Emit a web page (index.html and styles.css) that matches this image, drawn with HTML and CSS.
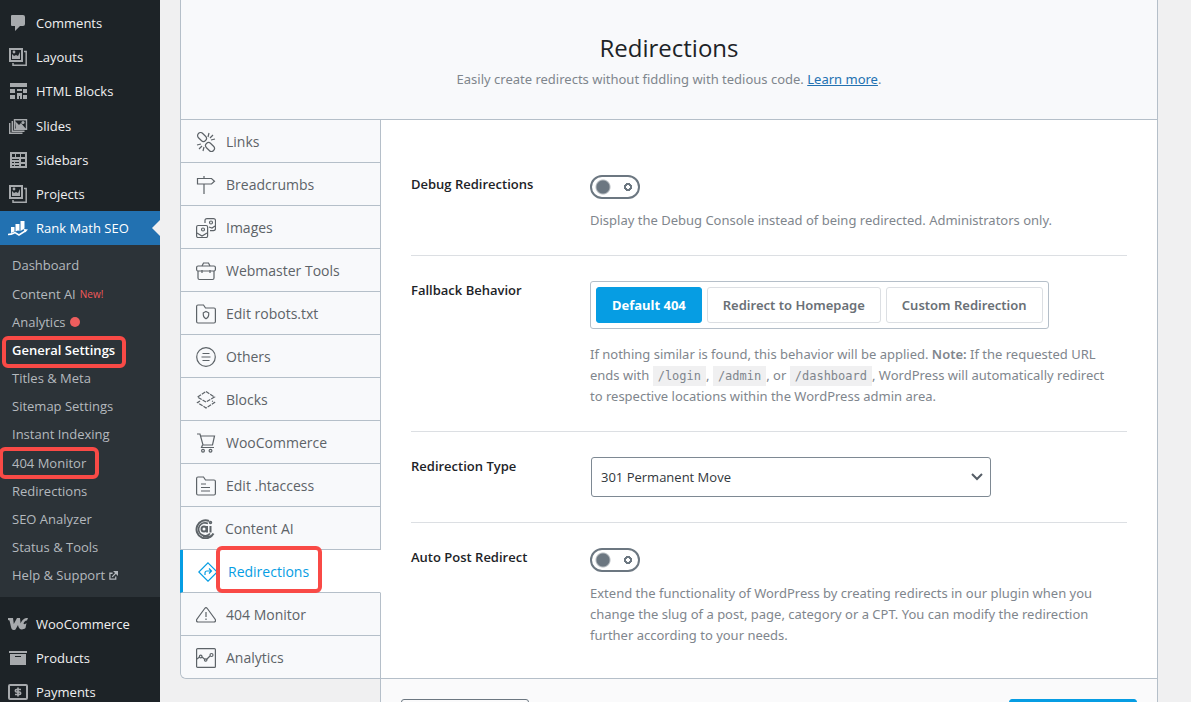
FILE: index.html
```html
<!DOCTYPE html>
<html lang="en">
<head>
<meta charset="utf-8">
<title>Redirections</title>
<link rel="stylesheet" href="styles.css">
</head>
<body>
<div class="layout">
  <nav class="admin-menu" aria-label="Main menu">
    <ul class="menu">
      <li><a class="menu-link" href="#"><svg class="menu-icon" viewBox="0 0 20 20"><path fill="currentColor" d="M4 2h11a2 2 0 0 1 2 2v7a2 2 0 0 1-2 2h-3l-5 5v-5H4a1 1 0 0 1-1-1V3a1 1 0 0 1 1-1z"/></svg>Comments</a></li>
      <li><a class="menu-link" href="#"><svg class="menu-icon" viewBox="0 0 20 20"><path fill="none" stroke="currentColor" stroke-width="2" d="M2 2h12v12H2z"/><path fill="none" stroke="currentColor" stroke-width="1.5" d="M16 4.5h2.2v13.7H5V16"/><path fill="currentColor" d="M4 12V7l2 2 2-1 2 1 2-4v7z"/><circle cx="6" cy="5" r="1.4" fill="currentColor"/></svg>Layouts</a></li>
      <li><a class="menu-link" href="#"><svg class="menu-icon" viewBox="0 0 20 20"><path fill="currentColor" d="M2 2h17v4H2zM2 8h5v4H2zM9 8h5v2H9zM15 8h4v4h-4zM2 14h5v4H2zM9 12h5v6h-2v-3h-1v3H9zM15 14h4v4h-4z"/></svg>HTML Blocks</a></li>
      <li><a class="menu-link" href="#"><svg class="menu-icon" viewBox="0 0 20 20"><path fill="none" stroke="currentColor" stroke-width="1.4" d="M6.5 3.7h12v9.500h-12zM4.300 5v10.300H16.500M1.700 7v10.300H14.500"/><path fill="currentColor" d="M7 5l4 4 2-2 5 6H8z"/><circle cx="15" cy="6.500" r="1.600" fill="currentColor"/></svg>Slides</a></li>
      <li><a class="menu-link" href="#"><svg class="menu-icon" viewBox="0 0 20 20"><path fill="currentColor" fill-rule="evenodd" d="M2 2h17v16H2zM4 4v3h3V4zM8 4v3h4V4zM13 4v3h4V4zM4 9v1h7V9zM13 9v3h4V9zM4 12v1h2v-1zM7 12v1h4v-1zM4 15v1h2v-1zM7 15v1h4v-1zM13 14v2h4v-2z"/></svg>Sidebars</a></li>
      <li><a class="menu-link" href="#"><svg class="menu-icon" viewBox="0 0 20 20"><path fill="none" stroke="currentColor" stroke-width="2" d="M2 2h12v12H2z"/><path fill="none" stroke="currentColor" stroke-width="1.5" d="M16 4.5h2.2v13.7H5V16"/><path fill="currentColor" d="M4 12V7l2 2 2-1 2 1 2-4v7z"/><circle cx="6" cy="5" r="1.4" fill="currentColor"/></svg>Projects</a></li>
      <li>
        <a class="menu-link menu-link-current" href="#"><svg class="menu-icon" viewBox="0 0 20 20"><path fill="currentColor" d="M3 9h3.500v4.500L3 15zM7.500 6h4v7L10 12.500l-2.500 1zM12.500 3h4v7.500L12.500 13z"/><path fill="none" stroke="currentColor" stroke-width="1.500" d="M0 16.500c4 0 5-1 7-2l4 2.500 7-4.500"/><path fill="currentColor" d="M15.500 11l4.500.5-3 3z"/></svg>Rank Math SEO</a>
        <ul class="submenu">
          <li><a class="sub-link" href="#">Dashboard</a></li>
          <li><a class="sub-link" href="#">Content AI <span class="new-tag">New!</span></a></li>
          <li><a class="sub-link" href="#">Analytics <span class="alert-dot"></span></a></li>
          <li class="marked"><a class="sub-link sub-link-current" href="#">General Settings</a><span class="mark mark-settings"></span></li>
          <li><a class="sub-link" href="#">Titles &amp; Meta</a></li>
          <li><a class="sub-link" href="#">Sitemap Settings</a></li>
          <li><a class="sub-link" href="#">Instant Indexing</a></li>
          <li class="marked"><a class="sub-link" href="#">404 Monitor</a><span class="mark mark-monitor"></span></li>
          <li><a class="sub-link" href="#">Redirections</a></li>
          <li><a class="sub-link" href="#">SEO Analyzer</a></li>
          <li><a class="sub-link" href="#">Status &amp; Tools</a></li>
          <li><a class="sub-link" href="#">Help &amp; Support <svg class="external" viewBox="0 0 10 10"><path fill="none" stroke="currentColor" stroke-width="1.400" d="M4 2.500H1v6.500h6.500V6M3.500 6.500L8 2"/><path fill="currentColor" d="M4.500 0H10v5.500z"/></svg></a></li>
        </ul>
      </li>
      <li class="menu-gap"><a class="menu-link" href="#"><svg class="menu-icon" viewBox="0 0 20 20"><path fill="currentColor" d="M0 4h5l.8 6L9 4h3l.6 5.500C14 6 16 4 20 4l-1 2.500c-2 0-3 1.500-3.500 3 .8 1.200 2 .5 3-.5L17.500 14c-2.500 2-5 1.500-6 .5-.8-.8-1.200-2-1.500-3.500L7.500 15.500C5 17 3.500 15.500 3 13L1.500 6.500 0 6z"/></svg>WooCommerce</a></li>
      <li><a class="menu-link" href="#"><svg class="menu-icon" viewBox="0 0 20 20"><path fill="currentColor" fill-rule="evenodd" d="M1 3h18v2H1zM2 6h16v11H2zM7 8v1h6V8z"/></svg>Products</a></li>
      <li><a class="menu-link" href="#"><svg class="menu-icon" viewBox="0 0 20 20"><rect x="1" y="3" width="18" height="14" rx="1" fill="none" stroke="currentColor" stroke-width="2"/><path fill="none" stroke="currentColor" stroke-width="1.700" d="M13 7.500H8.500c-1.500 0-1.500 2.500 0 2.500h3c1.500 0 1.500 2.500 0 2.500H7M10 5.500v9"/></svg>Payments</a></li>
    </ul>
  </nav>

  <main class="content">
    <section class="panel">
      <header class="panel-head">
        <h1 class="title">Redirections</h1>
        <p class="subtitle">Easily create redirects without fiddling with tedious code. <a class="learn" href="#">Learn more</a>.</p>
      </header>
      <div class="panel-body">
        <nav class="tabs" aria-label="Settings sections">
          <a class="tab" href="#"><svg class="tab-icon" viewBox="0 0 20 20"><rect x="1" y="2" width="10" height="6" rx="3" transform="rotate(45 6 5)"/><rect x="9" y="12" width="10" height="6" rx="3" transform="rotate(45 14 15)"/><path d="M12 5l1-4M14 6l3-3M15 8l4-1M1 13l4-1M3 17l3-3M7 19l1-4"/></svg>Links</a>
          <a class="tab" href="#"><svg class="tab-icon" viewBox="0 0 20 20"><path d="M8 1v2M8 9v10M1.500 3.500h14l3 2.700-3 2.800h-14z"/></svg>Breadcrumbs</a>
          <a class="tab" href="#"><svg class="tab-icon" viewBox="0 0 20 20"><rect x=".6" y="7.500" width="11" height="12" rx="1.500"/><path d="M9 5V2.500Q9 .6 11 .6h6.500q2 0 2 2v8q0 2-2 2H14M1 15l5 3 5-3M13 9l3 1 3-2"/><circle cx="7" cy="11.500" r="1.500"/><circle cx="15" cy="4.500" r="1.500"/></svg>Images</a>
          <a class="tab" href="#"><svg class="tab-icon" viewBox="0 0 20 20"><rect x=".6" y="5" width="18.800" height="5" rx="1.500"/><path d="M2 10v7q0 1.500 1.500 1.500h13q1.500 0 1.500-1.500v-7M6 5l1.500-3h5L14 5M6 9v3M14 9v3"/></svg>Webmaster Tools</a>
          <a class="tab" href="#"><svg class="tab-icon" viewBox="0 0 20 20"><path d="M.6 17.500v-15Q.6 1 2 1h5.500l2 3H18q1.400 0 1.400 1.500v12q0 1.500-1.400 1.500H2Q.6 19 .6 17.500z"/><path d="M10 7.500l2.700 1.300c.3 3-.5 5-2.700 6-2.200-1-3-3-2.700-6z"/></svg>Edit robots.txt</a>
          <a class="tab" href="#"><svg class="tab-icon" viewBox="0 0 20 20"><circle cx="10" cy="10" r="9.300"/><path d="M6.500 6.500h7M5.500 10h9M6.500 13.500h7"/></svg>Others</a>
          <a class="tab" href="#"><svg class="tab-icon" viewBox="0 0 20 20"><path d="M10 1.500l8.500 5.500-8.500 5-8.500-5z" stroke-dasharray="4 1"/><path d="M4 11l-2.500 1.500L10 18l8.500-5.500L16 11" stroke-dasharray="4 1"/></svg>Blocks</a>
          <a class="tab" href="#"><svg class="tab-icon" viewBox="0 0 20 20"><path d="M1 1h3l3 11h9.500L18.500 3H5M6.500 12l-1 2.500H18"/><circle cx="7" cy="17.800" r="1.400"/><circle cx="14.500" cy="17.800" r="1.400"/></svg>WooCommerce</a>
          <a class="tab" href="#"><svg class="tab-icon" viewBox="0 0 20 20"><path d="M.6 17.500v-15Q.6 1 2 1h5.500l2 3H18q1.400 0 1.400 1.500v12q0 1.500-1.400 1.500H2Q.6 19 .6 17.500zM5 8h5M5 11.500h9M5 15h9"/></svg>Edit .htaccess</a>
          <a class="tab tab-ai" href="#"><svg class="tab-icon" viewBox="0 0 20 20"><path stroke-width="2" d="M14 2A9 9 0 1 0 18.500 14.500"/><path stroke-width="1.700" d="M13 4.500A6.500 6.500 0 1 0 15 14.500"/><circle cx="9" cy="10" r="2.500" stroke-width="2"/><path stroke-width="2" d="M12 7v6.500M15.500 7v6.500M8 17.500h8"/><circle cx="15.500" cy="3.500" r="1" stroke-width="1.500"/></svg>Content AI</a>
          <div class="marked">
            <a class="tab tab-current" href="#" aria-current="page"><svg class="tab-icon" viewBox="0 0 20 20"><path d="M10 .8l9.200 9.200L10 19.200.8 10z"/><path d="M7 13v-2q0-2 2-2h4M11 6.500L13.500 9 11 11.500"/></svg>Redirections</a>
            <span class="mark mark-tab"></span>
          </div>
          <a class="tab" href="#"><svg class="tab-icon" viewBox="0 0 20 20"><path d="M8.700 3.500q1.300-1.700 2.600 0l8 11q.8 2.500-1.500 2.500H2.200Q0 17 .7 14.500zM10 7v5M10 13.500v1.500"/></svg>404 Monitor</a>
          <a class="tab tab-end" href="#"><svg class="tab-icon" viewBox="0 0 20 20"><rect x=".6" y=".6" width="18.800" height="18.800" rx="1"/><path d="M1 11l2.500-2M6 9l3 2.500M10.500 11.500L14 8"/><circle cx="4.700" cy="8.500" r="1.300"/><circle cx="9.700" cy="12" r="1.200"/><circle cx="15.500" cy="7" r="1.500"/></svg>Analytics</a>
        </nav>

        <form class="settings">
          <div class="row">
            <label class="label" for="debug">Debug Redirections</label>
            <div class="field">
              <input class="toggle" type="checkbox" id="debug">
              <p class="help">Display the Debug Console instead of being redirected. Administrators only.</p>
            </div>
          </div>
          <div class="row">
            <span class="label" id="fallback">Fallback Behavior</span>
            <div class="field">
              <div class="choices" role="group" aria-labelledby="fallback">
                <button class="choice choice-on" type="button">Default 404</button>
                <button class="choice" type="button">Redirect to Homepage</button>
                <button class="choice" type="button">Custom Redirection</button>
              </div>
              <p class="help help-wide">If nothing similar is found, this behavior will be applied. <strong>Note:</strong> If the requested URL ends with <code>/login</code>, <code>/admin</code>, or <code>/dashboard</code>, WordPress will automatically redirect to respective locations within the WordPress admin area.</p>
            </div>
          </div>
          <div class="row">
            <label class="label" for="type">Redirection Type</label>
            <div class="field">
              <div class="select-wrap">
                <select class="select" id="type"><option>301 Permanent Move</option></select>
                <svg class="chevron" viewBox="0 0 12 8"><path d="M1 1l5 5 5-5"/></svg>
              </div>
            </div>
          </div>
          <div class="row">
            <label class="label" for="auto">Auto Post Redirect</label>
            <div class="field">
              <input class="toggle" type="checkbox" id="auto">
              <p class="help">Extend the functionality of WordPress by creating redirects in our plugin when you change the slug of a post, page, category or a CPT. You can modify the redirection further according to your needs.</p>
            </div>
          </div>
        </form>
      </div>
    </section>
    <footer class="actions">
      <button class="action" type="button" aria-label="Reset Options"></button>
      <button class="action action-save" type="button" aria-label="Save Changes"></button>
    </footer>
  </main>
</div>
</body>
</html>
```
FILE: styles.css
```css
* { box-sizing: border-box; }

body {
  margin: 0;
  height: 100vh;
  overflow: hidden;
  background: #f0f0f1;
  color: #1d2327;
  font: 14px/20px "Open Sans", "Noto Sans", sans-serif;
}

ul { list-style: none; margin: 0; padding: 0; }
a { text-decoration: none; }

.layout { display: flex; min-height: 100vh; }

/* Admin menu */
.admin-menu {
  flex: none;
  width: 160px;
  padding-top: 6px;
  background: #1d2327;
}
.menu-link {
  display: flex;
  align-items: center;
  gap: 8px;
  padding: 8px;
  color: #f0f0f1;
  font-size: 13px;
  line-height: 1.4;
  white-space: nowrap;
}
.menu-icon { width: 20px; height: 20px; margin: -1px 0; color: #a7aaad; }
.menu-gap { margin-top: 10px; }
.menu-link-current { position: relative; background: #2271b1; color: #fff; }
.menu-link-current .menu-icon { color: #fff; }
.menu-link-current::after {
  content: "";
  position: absolute;
  right: 0;
  top: 9px;
  border: 8px solid transparent;
  border-left: 0;
  border-right-color: #f0f0f1;
}
.submenu { padding: 6px 0 7px; background: #2c3338; }
.sub-link {
  display: flex;
  align-items: center;
  gap: 4px;
  padding: 5px 12px;
  color: #b4b9be;
  font-size: 13px;
  line-height: 1.4;
  white-space: nowrap;
}
.sub-link-current { color: #fff; font-weight: 600; }
.new-tag { color: #f05a5a; font-size: 10px; line-height: 14px; }
.alert-dot { width: 10px; height: 10px; border-radius: 50%; background: #ee5e5e; }
.external { width: 9px; height: 9px; }

/* Highlight frames */
.marked { position: relative; }
.mark {
  position: absolute;
  border: 4px solid #f94a46;
  border-radius: 6px;
  pointer-events: none;
}
.mark-settings { inset: 0 34px -4px 2px; }
.mark-monitor { inset: -2px 61px -2px -1px; }
.mark-tab { inset: -4px 59px 0 35px; }

/* Panel */
.content { flex: 1; min-width: 0; padding: 0 33px 0 20px; }
.panel {
  border: 1px solid #b5bfc9;
  border-top: 0;
  border-radius: 0 0 0 6px;
  background: #f8f9fa;
}
.panel-head {
  padding: 32px 20px 30px;
  border-bottom: 1px solid #b5bfc9;
  background: #f8f9fb;
  text-align: center;
}
.title { margin: 0 0 5px; font-size: 24px; font-weight: 500; line-height: 32px; }
.subtitle {
  margin: 0;
  color: #7f868d;
  font: 13px/20px "Noto Sans", "Open Sans", sans-serif;
}
.learn { color: #2271b1; text-decoration: underline; }
.panel-body { display: grid; grid-template-columns: 200px 1fr; }

.tabs { background: #f8f9fb; border-radius: 0 0 0 6px; }
.tab {
  display: flex;
  align-items: center;
  gap: 10px;
  height: 43px;
  padding: 1px 0 0 15px;
  border-right: 1px solid #b5bfc9;
  border-bottom: 1px solid #b5bfc9;
  color: #5d6368;
  font-size: 14px;
}
.tab-end { height: 42px; border-bottom: 0; }
.tab-icon {
  width: 20px;
  height: 20px;
  fill: none;
  stroke: currentColor;
  stroke-width: 1.2;
}
.tab-ai { padding-left: 14px; }
.tab-current {
  margin-left: -1px;
  border-left: 3px solid #069de3;
  border-right-color: #fff;
  background: #fff;
  color: #069de3;
}

/* Settings */
.settings { padding: 30px; background: #fff; }
.row {
  display: grid;
  grid-template-columns: 179px 1fr;
  padding: 25px 0 24px;
  border-bottom: 1px solid #dcdfe3;
}
.row:last-child { border-bottom: 0; padding-bottom: 0; }
.label { font-weight: 600; font-size: 13px; line-height: 18px; }
.help {
  margin: 11px 0 0;
  padding-right: 10px;
  color: #7f868d;
  font: 13px/21px "Noto Sans", "Open Sans", sans-serif;
}
.help-wide { margin-top: 15px; }
.help code {
  padding: 3px 5px;
  background: #f0f0f1;
  font: 12px "DejaVu Sans Mono", monospace;
}
.help strong { font-weight: 600; }

.toggle {
  appearance: none;
  display: block;
  width: 50px;
  height: 24px;
  margin: 0;
  border: 2px solid #6c7781;
  border-radius: 12px;
  background:
    radial-gradient(circle at 11px 10px, #6c7781 6px, transparent 8px),
    radial-gradient(circle at 36px 10px, transparent 2px, #6c7781 2px, #6c7781 4px, transparent 4px),
    #fff;
}

.choices {
  display: inline-flex;
  gap: 5px;
  padding: 5px;
  border: 1px solid #b5bfc9;
  border-radius: 3px;
  vertical-align: top;
}
.choice {
  height: 36px;
  padding: 0 15px;
  border: 1px solid #dcdfe3;
  border-radius: 3px;
  background: #fff;
  color: #6a7076;
  font: 600 13px/20px "Noto Sans", "Open Sans", sans-serif;
  white-space: nowrap;
}
.choice-on { border-color: #069de3; background: #069de3; color: #fff; font-weight: 700; }

.select-wrap {
  display: grid;
  align-items: center;
  max-width: 401px;
  margin-bottom: 1px;
  padding-left: 1px;
}
.select {
  grid-area: 1 / 1;
  appearance: none;
  width: 100%;
  height: 40px;
  padding: 0 30px 0 9px;
  border: 1px solid #7e8993;
  border-radius: 3px;
  background: #fff;
  color: #32373c;
  font: 13px/20px "Open Sans", "Noto Sans", sans-serif;
}
.chevron {
  grid-area: 1 / 1;
  justify-self: end;
  width: 12px;
  height: 8px;
  margin-right: 8px;
  fill: none;
  stroke: #555d66;
  stroke-width: 2;
  pointer-events: none;
}

/* Footer actions */
.actions {
  display: flex;
  justify-content: space-between;
  margin-left: 200px;
  padding: 20px;
  border: 1px solid #b5bfc9;
  border-top: 0;
  background: #fafafb;
}
.action {
  width: 128px;
  height: 36px;
  border: 1px solid #6c7781;
  border-radius: 3px;
  background: #fafafb;
}
.action-save { border-color: #069de3; background: #069de3; }
```
